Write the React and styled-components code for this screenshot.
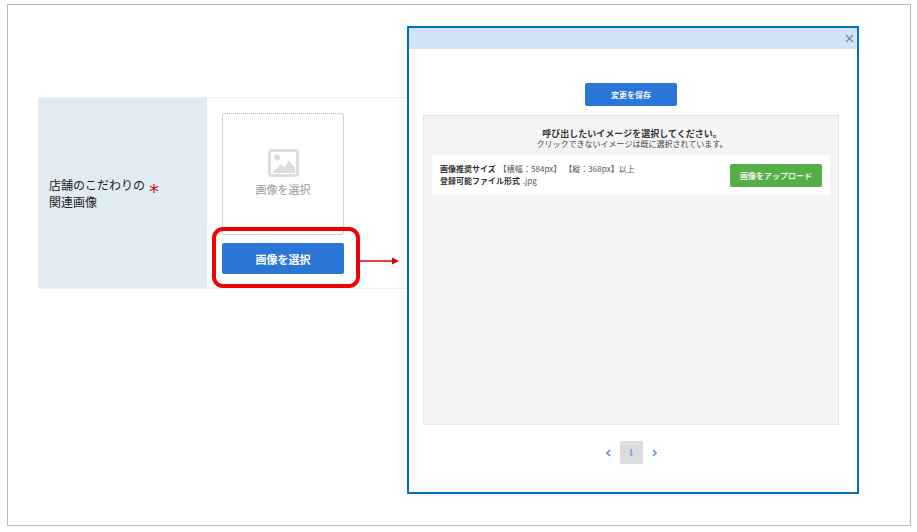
import React from 'react';
import styled, { createGlobalStyle } from 'styled-components';

const GlobalStyle = createGlobalStyle`
  html, body {
    margin: 0;
    padding: 0;
    background: #fff;
  }
  * {
    box-sizing: border-box;
  }
  body {
    font-family: "Noto Sans CJK JP", "Noto Sans", sans-serif;
    color: #333;
  }
`;

const Page = styled.div`
  width: 917px;
  height: 532px;
  padding: 4px 6px 6px 7px;
`;

const Frame = styled.div`
  position: relative;
  height: 100%;
  border: 1px solid #b4b9cc;
  display: flex;
  padding: 21px 0 0 30px;
`;

const FormRow = styled.div`
  width: 369px;
  height: 192px;
  margin-top: 71px;
  display: flex;
  border-top: 1px solid #eef0f3;
  border-bottom: 1px solid #eef0f3;
`;

const LabelCell = styled.div`
  width: 169px;
  background: #e1ebf4;
  display: flex;
  align-items: center;
  padding: 0 0 2px 11px;
  font-size: 12px;
  line-height: 17px;
  color: #222;
`;

const Required = styled.span`
  font-family: "DejaVu Sans", sans-serif;
  color: #c9151e;
  font-size: 20px;
  line-height: 17px;
  margin-left: 4px;
  position: relative;
  top: 8px;
`;

const FieldCell = styled.div`
  flex: 1;
  padding: 15px 0 0 15px;
  display: flex;
  flex-direction: column;
  gap: 8px;
`;

const ImageDrop = styled.div`
  width: 122px;
  height: 122px;
  border: 1px dotted #aaa;
  border-radius: 3px;
  display: flex;
  flex-direction: column;
  align-items: center;
  padding-top: 35px;
  gap: 4px;
  color: #999;
  font-size: 11px;
  line-height: 16px;
`;

const SelectButton = styled.div`
  width: 122px;
  height: 31px;
  background: #2a75d6;
  border-radius: 2px;
  color: #fff;
  font-size: 11px;
  font-weight: 700;
  display: flex;
  align-items: center;
  justify-content: center;
`;

const Highlight = styled.div`
  position: absolute;
  left: 204px;
  top: 222px;
  width: 148px;
  height: 61px;
  border: 4px solid #f00000;
  border-radius: 11px;
`;

const Arrow = styled.svg`
  position: absolute;
  left: 351px;
  top: 250px;
`;

const Modal = styled.div`
  width: 452px;
  height: 468px;
  border: 2px solid #0070c0;
  background: #fff;
  display: flex;
  flex-direction: column;
  position: relative;
`;

const ModalHeader = styled.div`
  height: 21px;
  background: #d2e2f8;
  display: flex;
  justify-content: flex-end;
  align-items: center;
  padding-right: 3px;
  color: #8a8f96;
`;

const ModalBody = styled.div`
  flex: 1;
  display: flex;
  flex-direction: column;
  align-items: center;
  padding: 34px 18px 0 14px;
`;

const SaveButton = styled.div`
  width: 92px;
  height: 23px;
  background: #2a75d6;
  border-radius: 2px;
  color: #f0f5fc;
  font-size: 8px;
  font-weight: 700;
  display: flex;
  align-items: center;
  justify-content: center;
`;

const Gallery = styled.div`
  width: 416px;
  height: 310px;
  margin-top: 9px;
  background: #f4f4f4;
  border: 1px solid #e6e6e6;
  padding: 12px 8px 0 8px;
`;

const GalleryTitle = styled.div`
  text-align: center;
  padding-left: 2px;
  font-size: 9px;
  line-height: 11px;
  font-weight: 700;
  color: #333;
`;

const GalleryNote = styled.div`
  text-align: center;
  padding-left: 2px;
  font-size: 8px;
  line-height: 9px;
  color: #444;
`;

const InfoBar = styled.div`
  margin-top: 7px;
  height: 40px;
  background: #fff;
  display: flex;
  align-items: center;
  justify-content: space-between;
  padding: 0 8px;
`;

const InfoText = styled.div`
  font-size: 8px;
  line-height: 12px;
  color: #555;
  word-spacing: 1px;
`;

const InfoLabel = styled.b`
  color: #333;
  font-weight: 700;
`;

const SizeHint = styled.span`
  letter-spacing: 0.05px;
  margin-left: 3px;
`;

const UploadButton = styled.div`
  width: 92px;
  height: 23px;
  background: #56ae48;
  border-radius: 2px;
  color: #e8f4e4;
  font-size: 8px;
  font-weight: 700;
  display: flex;
  align-items: center;
  justify-content: center;
`;

const Pager = styled.div`
  display: flex;
  align-items: center;
  gap: 9px;
  margin-top: 16px;
  color: #5a90e0;
`;

const PageNumber = styled.div`
  width: 23px;
  height: 23px;
  background: #dcdcdc;
  border-radius: 2px;
  font-family: "Liberation Serif", serif;
  font-size: 10px;
  font-weight: 700;
  color: #6f9fe0;
  display: flex;
  align-items: center;
  justify-content: center;
`;

const PictureIcon = () => (
  <svg width="31" height="28" viewBox="0 0 31 28">
    <rect x="1.5" y="1.5" width="28" height="25" rx="2.5" fill="none" stroke="#dcdcdc" strokeWidth="3" />
    <circle cx="9" cy="8.5" r="3" fill="#dcdcdc" />
    <path d="M4 24 L13 15 L16.5 18.5 L21 11.5 L27 19 V24 Z" fill="#dcdcdc" />
  </svg>
);

const Chevron = ({ flip }) => (
  <svg width="5" height="8" viewBox="0 0 5 8">
    <path d={flip ? 'M1 1 L4 4 L1 7' : 'M4 1 L1 4 L4 7'} fill="none" stroke="currentColor" strokeWidth="1.6" />
  </svg>
);

const App = () => (
  <Page>
    <GlobalStyle />
    <Frame>
      <FormRow>
        <LabelCell>
          <div>
            店舗のこだわりの<Required>*</Required>
            <br />
            関連画像
          </div>
        </LabelCell>
        <FieldCell>
          <ImageDrop>
            <PictureIcon />
            画像を選択
          </ImageDrop>
          <SelectButton>画像を選択</SelectButton>
        </FieldCell>
      </FormRow>
      <Modal>
        <ModalHeader>
          <svg width="9" height="9" viewBox="0 0 9 9">
            <path d="M1 1 L8 8 M8 1 L1 8" stroke="currentColor" strokeWidth="1.6" />
          </svg>
        </ModalHeader>
        <ModalBody>
          <SaveButton>変更を保存</SaveButton>
          <Gallery>
            <GalleryTitle>呼び出したいイメージを選択してください。</GalleryTitle>
            <GalleryNote>クリックできないイメージは既に選択されています。</GalleryNote>
            <InfoBar>
              <InfoText>
                <InfoLabel>画像推奨サイズ</InfoLabel>
                <SizeHint>【横幅：584px】 【縦：368px】以上</SizeHint>
                <br />
                <InfoLabel>登録可能ファイル形式</InfoLabel> .jpg
              </InfoText>
              <UploadButton>画像をアップロード</UploadButton>
            </InfoBar>
          </Gallery>
          <Pager>
            <Chevron />
            <PageNumber>1</PageNumber>
            <Chevron flip />
          </Pager>
        </ModalBody>
      </Modal>
      <Highlight />
      <Arrow width="40" height="12" viewBox="0 0 40 12">
        <path d="M0 6 H33" stroke="#e00000" strokeWidth="1.4" />
        <path d="M33 2.5 L40 6 L33 9.5 Z" fill="#e00000" />
      </Arrow>
    </Frame>
  </Page>
);

export default App;
